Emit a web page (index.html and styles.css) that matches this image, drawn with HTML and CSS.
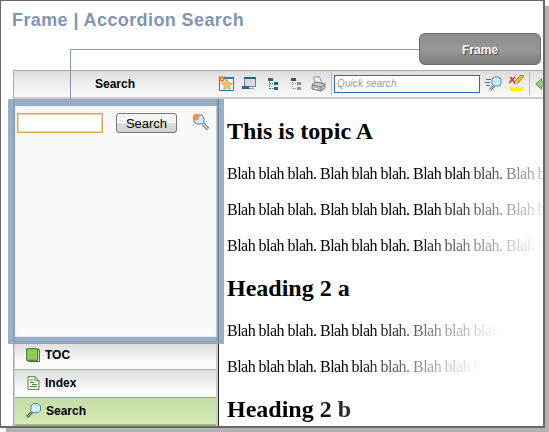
FILE: index.html
```html
<!DOCTYPE html>
<html lang="en">
<head>
<meta charset="utf-8">
<title>Frame | Accordion Search</title>
<link rel="stylesheet" href="styles.css">
</head>
<body>
<svg class="defs" width="0" height="0" aria-hidden="true">
  <symbol id="burst" viewBox="0 0 8 8"><path d="M4 0l.9 2L7 1 6 3.200 8 4l-2 .9L7 7l-2.100-1L4 8l-.9-2L1 7l1-2.100L0 4l2-.9L1 1l2.100 1z" fill="#ef711b"/><circle cx="4" cy="4" r="1.300" fill="#ffc160"/></symbol>
  <symbol id="tree" viewBox="0 0 12 12"><path d="M0 0h5v3H0zM6 4h4v3H6zM6 9h4v3H6z" fill="currentColor"/><path d="M1.500 4v8M2 5.500h4M2 10.500h4" stroke="currentColor" stroke-dasharray="1 1" fill="none"/></symbol>
</svg>
<main class="window">
  <h1 class="title">Frame | Accordion Search</h1>
  <section class="app">
    <header class="toolbar">
      <div class="panel-title">Search</div>
      <div class="tools">
        <svg class="star" width="17" height="17" viewBox="0 0 17 17"><path d="M1.500 3.500h14v12h-14z" fill="#f1faff" stroke="#287fb0"/><path d="M1 2h15v2H1z" fill="#287fb0"/><path d="M9 4.500l1.500 3.500 4 .3-3 2.700.9 3.700L9 12.700l-3.400 2 .9-3.700-3-2.700 4-.3z" fill="#fac768" stroke="#d58a2a" stroke-width=".7"/><use href="#burst" width="8" height="8"/></svg>
        <svg class="screen" width="14" height="13" viewBox="0 0 14 13"><path d="M2.500.5h11v9h-11z" fill="#d9d9e5" stroke="#777995"/><path d="M2 0h12v2H2z" fill="#286582"/><path d="M0 9h7v3H0z" fill="#246783"/><path d="M7 11.500h5" stroke="#999"/></svg>
        <svg class="tree" width="12" height="12"><use href="#tree"/></svg>
        <svg class="tree muted" width="12" height="12"><use href="#tree"/><path d="M0 0h5v3H0z" fill="#3d5964"/></svg>
        <svg class="printer" width="15" height="16" viewBox="0 0 15 16"><path d="M4 8L2.500 1.500 8 0l3 7z" fill="#e0f2ff" stroke="#8499a9"/><path d="M1 9l4-3 9 2v4l-4 3-9-2z" fill="#ccc" stroke="#777"/><path d="M1 9l9 2 4-3M10 11v4" fill="none" stroke="#777"/><path d="M3 11l5 1.500v1.500l-5-1z" fill="#fff" stroke="#888" stroke-width=".6"/></svg>
        <span class="separator"></span>
        <div class="quick">Quick search</div>
        <svg class="go" width="17" height="16" viewBox="0 0 17 16"><path d="M1 3.500h5M0 6.500h5M1 9.500h4" stroke="#35769c"/><path d="M9 10l-4 4" stroke="#76828f" stroke-width="3"/><path d="M8.700 10.300l-3.700 3.700" stroke="#ddd"/><path d="M9 1h5l2 2v5l-2 2H9L7 8V3z" fill="#cceafd" stroke="#528bad"/></svg>
        <svg class="highlight" width="16" height="17" viewBox="0 0 16 17"><path d="M1 12h13v4H1z" fill="#fff000"/><path d="M5 9l1-3 6-6 3 1-6 7z" fill="#edbd32" stroke="#a9791f"/><path d="M6 6l3 2-3 1z" fill="#fff1a0"/><path d="M1 2l5 6M6 2L0 8" stroke="#c8292d" stroke-width="1.400"/></svg>
        <span class="separator last"></span>
        <svg class="back" width="8" height="12" viewBox="0 0 8 12"><path d="M8 3.700H6.700v-3L.7 6l6 5.300v-3H8" fill="#9bc780" stroke="#668d50"/></svg>
      </div>
    </header>
    <div class="body">
      <aside class="sidebar">
        <form class="search-panel">
          <div class="field"></div>
          <div class="button">Search</div>
          <svg class="find" width="18" height="18" viewBox="0 0 18 18"><path d="M11 11l5 5" stroke="#6d7080" stroke-width="3.500"/><path d="M11 11l4.700 4.700" stroke="#e5e2e8" stroke-width="1.500"/><path d="M5 2h5l2 3v4l-2 2H5L2 9V5z" fill="#ceeffb" stroke="#68778c"/><use href="#burst" width="8" height="8"/></svg>
        </form>
        <div class="item"><svg width="14" height="14" viewBox="0 0 14 14"><path d="M.7.700h11v11.600h-11z" fill="#92cb54" stroke="#3d7132"/><path d="M12 1.500h1.400v12H2.500L1 12" fill="none" stroke="#3d7132"/></svg><span>TOC</span></div>
        <div class="item index"><svg width="13" height="14" viewBox="0 0 13 14"><path d="M1 .6h7l4 4v8.800H1z" fill="#f5fff0" stroke="#547e4b"/><path d="M8 .6v4h4M3 4h3M3 6.500h4M3 10.500h7M5 8.500h5" fill="none" stroke="#547e4b"/></svg><span>Index</span></div>
        <div class="item active"><svg width="16" height="15" viewBox="0 0 16 15"><path d="M6 9l-5 5" stroke="#4b6b41" stroke-width="3"/><path d="M5.500 9.500L1.500 13.500" stroke="#a8cc83"/><path d="M7 .7h5l2.500 2.500v4L12 9.700H7L5 7.500V3z" fill="#d3f0ff" stroke="#527f91"/></svg><span>Search</span></div>
      </aside>
      <article class="topic">
        <h2>This is topic A</h2>
        <p class="fade-a">Blah blah blah. Blah blah blah. Blah blah blah. Blah b</p>
        <p class="fade-b">Blah blah blah. Blah blah blah. Blah blah blah. Blah b</p>
        <p class="fade-c">Blah blah blah. Blah blah blah. Blah blah blah. Blah b</p>
        <h2>Heading 2 a</h2>
        <p class="fade-d">Blah blah blah. Blah blah blah. Blah blah blah.</p>
        <p class="fade-e">Blah blah blah. Blah blah blah. Blah blah blah.</p>
        <h2 class="fade-f">Heading 2 b</h2>
      </article>
    </div>
  </section>
  <div class="outline"></div>
  <div class="connector"></div>
  <div class="callout">Frame</div>
</main>
</body>
</html>
```
FILE: styles.css
```css
* { box-sizing: border-box; }
body { margin: 0; width: 549px; height: 432px; overflow: hidden; background: #fff; font-family: "Liberation Sans", Arial, sans-serif; }
svg { display: block; flex: none; }
.defs { position: absolute; }
.window { position: relative; width: 545px; height: 428px; border: 1px solid #686868; border-right-width: 2px; border-bottom-width: 2px; background: #fff; box-shadow: 6px 6px 1px #b2b2b2; padding-left: 12px; overflow: hidden; }
.title { margin: 0 0 0 -1px; height: 69px; padding-top: 9px; font-size: 18px; line-height: 20px; color: #8096b0; letter-spacing: .4px; white-space: nowrap; }
.app { border-left: 1px solid #aaa; height: 357px; }
.toolbar { display: flex; height: 29px; border-top: 1px solid #aaa; border-bottom: 2px solid #ccc; background: linear-gradient(#ddd, #eee 50%, #fafafa); }
.panel-title { width: 203px; padding: 5px 0 0 81px; font-size: 12px; line-height: 16px; font-weight: bold; }
.tools { display: flex; align-items: center; flex: 1; overflow: hidden; padding-bottom: 1px; }
.star { margin-left: 1px; }
.screen { margin-left: 7px; }
.tree { margin-left: 12px; color: #25677a; }
.tree.muted { margin-left: 11px; color: #8b9499; }
.printer { margin-left: 8px; }
.separator { width: 1px; height: 23px; margin-left: 5px; background: #bbb; flex: none; }
.quick { width: 146px; height: 18px; margin-left: 2px; border: 1px solid #286bba; background: #fff; color: #999; font-size: 10px; line-height: 16px; font-style: italic; padding-left: 2px; flex: none; letter-spacing: .1px; }
.go { margin-left: 5px; }
.highlight { margin-left: 7px; }
.last { margin-left: 4px; }
.back { margin-left: 5px; }
.body { display: flex; height: 328px; }
.sidebar { width: 205px; border-right: 1px solid #222; padding: 1px 2px 0 1px; background: #ccc; flex: none; }
.search-panel { display: flex; height: 241px; background: #f9f9f9; padding: 13px 0 0 2px; align-items: flex-start; }
.field { width: 86px; height: 20px; border: 1px solid #d6a74e; box-shadow: inset 0 0 0 1px #eed39c; background: #fff; }
.button { width: 61px; height: 20px; margin-left: 13px; border: 1px solid #777; border-radius: 3px; background: linear-gradient(#f3f3f3 48%, #ddd 52%, #d0d0d0); font-size: 13px; line-height: 19px; text-align: center; }
.find { margin-left: 15px; }
.item { display: flex; align-items: center; height: 28px; border-top: 1px solid #a5b697; background: linear-gradient(#ddd, #fafafa 75%); padding: 0 0 1px 11px; font-size: 12px; font-weight: bold; }
.item span { margin-left: 5px; }
.index { padding-left: 12px; }
.active { height: 29px; border-top-color: #8fb569; border-bottom: 2px solid #99b580; background: linear-gradient(#c4dca4, #d6ebb9); }
.active span { margin-left: 4px; }
.topic { flex: 1; min-width: 0; overflow: hidden; padding: 19px 0 0 8px; font-family: "Liberation Serif", "Times New Roman", serif; white-space: nowrap; }
.topic h2 { margin: 0 0 20px; font-size: 24px; line-height: 27px; }
.topic p { width: 316px; margin: 0 0 18px; font-size: 16px; line-height: 18px; letter-spacing: -.52px; }
.topic p + h2 { margin-top: 20px; }
.fade-a { mask-image: linear-gradient(90deg, #000 230px, #0008 280px, #0004 316px); }
.fade-b { mask-image: linear-gradient(90deg, #000 205px, #0008 260px, #0002 316px); }
.fade-c { mask-image: linear-gradient(90deg, #000 185px, #0008 240px, transparent 316px); }
.fade-d { mask-image: linear-gradient(90deg, #000 145px, #0008 200px, transparent 275px); }
.fade-e { mask-image: linear-gradient(90deg, #000 125px, #0008 180px, transparent 255px); }
.fade-f { mask-image: linear-gradient(90deg, #000 80px, #000c 125px, transparent 225px); }
.outline { position: absolute; left: 7px; top: 98px; width: 216px; height: 245px; border: 7px solid #7f9bb6cc; box-shadow: inset 0 0 2px #7775; }
.connector { position: absolute; left: 69px; top: 48px; width: 350px; height: 51px; border: solid #8299ac; border-width: 1px 0 0 1px; }
.callout { position: absolute; left: 418px; top: 32px; width: 122px; height: 32px; border: 1px solid #6c6c6c; border-radius: 6px; background: linear-gradient(#8c8c8c, #989898 55%, #7c7c7c); color: #fff; text-shadow: 1px 1px 1px #444; font-size: 12px; font-weight: bold; line-height: 32px; text-align: center; }
```
